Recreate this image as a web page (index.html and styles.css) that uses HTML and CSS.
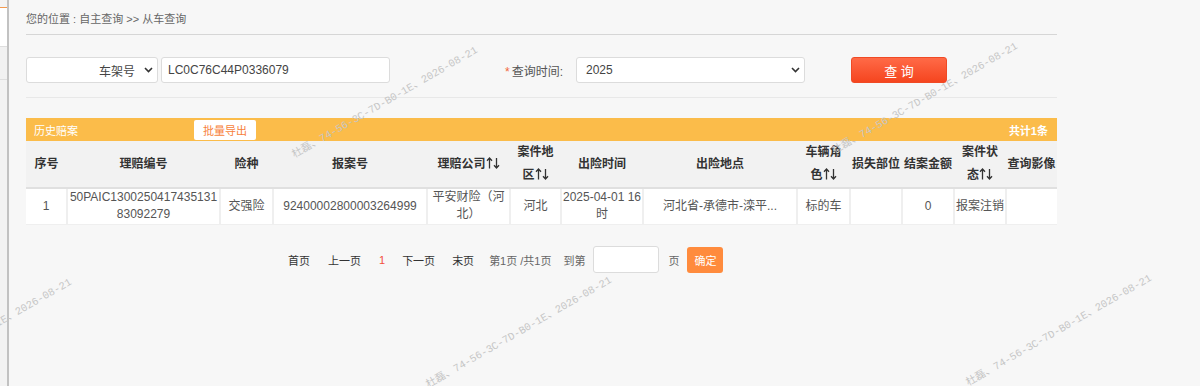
FILE: index.html
```html
<!DOCTYPE html>
<html lang="zh-CN">
<head>
<meta charset="utf-8">
<title>从车查询</title>
<link rel="stylesheet" href="styles.css">
</head>
<body>
<div class="page">
  <aside class="side">
    <div class="side-top"></div>
    <div class="side-item active"></div>
    <div class="side-item"></div>
  </aside>
  <main class="main">
    <div class="content">
      <div class="crumb">您的位置 : 自主查询 &gt;&gt; 从车查询</div>
      <form class="search">
        <div class="sel sel-type"><span>车架号</span><svg class="chev" width="9" height="6" viewBox="0 0 9 6"><polyline points="1,1 4.5,4.5 8,1" fill="none" stroke="#333" stroke-width="1.6"/></svg></div>
        <div class="inp">LC0C76C44P0336079</div>
        <label class="lbl"><em>*</em>查询时间:</label>
        <div class="sel sel-year"><span>2025</span><svg class="chev" width="9" height="6" viewBox="0 0 9 6"><polyline points="1,1 4.5,4.5 8,1" fill="none" stroke="#333" stroke-width="1.6"/></svg></div>
        <button type="button" class="btn-query">查 询</button>
      </form>
      <section class="result">
        <div class="bar">
          <span class="bar-title">历史赔案</span>
          <button type="button" class="btn-export">批量导出</button>
          <span class="bar-total">共计1条</span>
        </div>
        <table class="grid">
          <colgroup>
            <col class="c41"><col class="c153"><col class="c53"><col class="c154"><col class="c83"><col class="c51"><col class="c82"><col class="c154"><col class="c53"><col class="c52"><col class="c52"><col class="c52"><col class="c51">
          </colgroup>
          <thead>
            <tr>
              <th>序号</th>
              <th>理赔编号</th>
              <th>险种</th>
              <th>报案号</th>
              <th>理赔公<span class="nw">司<svg class="ar" width="14" height="12" viewBox="0 0 14 12"><path d="M3.5 11.5V1M1 3.8L3.5 1L6 3.8M10.5 1v10.5M8 8.2l2.5 2.8l2.5-2.8" fill="none" stroke="#333" stroke-width="1.3"/></svg></span></th>
              <th>案件地<span class="nw">区<svg class="ar" width="14" height="12" viewBox="0 0 14 12"><path d="M3.5 11.5V1M1 3.8L3.5 1L6 3.8M10.5 1v10.5M8 8.2l2.5 2.8l2.5-2.8" fill="none" stroke="#333" stroke-width="1.3"/></svg></span></th>
              <th>出险时间</th>
              <th>出险地点</th>
              <th>车辆角<span class="nw">色<svg class="ar" width="14" height="12" viewBox="0 0 14 12"><path d="M3.5 11.5V1M1 3.8L3.5 1L6 3.8M10.5 1v10.5M8 8.2l2.5 2.8l2.5-2.8" fill="none" stroke="#333" stroke-width="1.3"/></svg></span></th>
              <th class="one">损失部位</th>
              <th class="one">结案金额</th>
              <th>案件状<span class="nw">态<svg class="ar" width="14" height="12" viewBox="0 0 14 12"><path d="M3.5 11.5V1M1 3.8L3.5 1L6 3.8M10.5 1v10.5M8 8.2l2.5 2.8l2.5-2.8" fill="none" stroke="#333" stroke-width="1.3"/></svg></span></th>
              <th class="one">查询影像</th>
            </tr>
          </thead>
          <tbody>
            <tr>
              <td>1</td>
              <td class="brk">50PAIC130025041743513183092279</td>
              <td>交强险</td>
              <td>92400002800003264999</td>
              <td>平安财险（河北）</td>
              <td>河北</td>
              <td><span class="nw">2025-04-01 16</span><wbr>时</td>
              <td>河北省-承德市-滦平...</td>
              <td>标的车</td>
              <td></td>
              <td>0</td>
              <td>报案注销</td>
              <td></td>
            </tr>
          </tbody>
        </table>
      </section>
      <nav class="pager">
        <a class="pg pg-first">首页</a>
        <a class="pg pg-prev">上一页</a>
        <a class="pg pg-cur">1</a>
        <a class="pg pg-next">下一页</a>
        <a class="pg pg-last">末页</a>
        <span class="pg-info">第1页 /共1页</span>
        <span class="pg-to">到第</span>
        <span class="pg-input"></span>
        <span class="pg-unit">页</span>
        <button type="button" class="pg-ok">确定</button>
      </nav>
    </div>
  </main>
</div>
<div class="wm-layer">
  <span class="wm wm-a">杜磊、74-56-3C-7D-B0-1E、2026-08-21</span>
  <span class="wm wm-b">杜磊、74-56-3C-7D-B0-1E、2026-08-21</span>
  <span class="wm wm-c">杜磊、74-56-3C-7D-B0-1E、2026-08-21</span>
  <span class="wm wm-d">杜磊、74-56-3C-7D-B0-1E、2026-08-21</span>
  <span class="wm wm-e">杜磊、74-56-3C-7D-B0-1E、2026-08-21</span>
</div>
</body>
</html>
```
FILE: styles.css
```css
* { box-sizing: border-box; }
html, body {
  margin: 0;
  padding: 0;
  height: 100%;
}
body {
  position: relative;
  overflow: hidden;
  background: #f7f7f7;
  font-family: "Liberation Sans", "Noto Sans CJK SC", sans-serif;
  color: #555;
}
.page {
  display: flex;
  min-height: 386px;
}
.side {
  width: 9px;
  flex: none;
  background: #f3f3f3;
  border-right: 2px solid #c2c2c2;
}
.side-top {
  height: 7px;
  background: #f3f3f3;
}
.side-item {
  height: 33px;
  border-bottom: 1px solid #dedede;
  background: #f1f1f1;
}
.side-item.active {
  height: 40px;
  background: #fff;
  border-top: 1px solid #f39a4f;
}
.main {
  flex: 1;
  padding-left: 17px;
}
.content {
  width: 1031px;
}
.crumb {
  font-size: 11px;
  line-height: 16px;
  color: #666;
  padding: 11px 0 7px;
  border-bottom: 1px solid #d6d6d6;
}
.search {
  display: flex;
  align-items: center;
  margin: 0;
  padding: 22px 0 14px;
  border-bottom: 1px solid #e8e8e8;
}
.sel, .inp {
  height: 26px;
  background: #fff;
  border: 1px solid #dcdcdc;
  border-radius: 3px;
  font-size: 12px;
  color: #444;
  display: flex;
  align-items: center;
}
.sel-type {
  width: 132px;
  justify-content: flex-end;
  padding-right: 4px;
}
.sel-type span { margin-right: 9px; }
.inp {
  width: 229px;
  margin-left: 3px;
  padding-left: 6px;
}
.lbl {
  margin-left: 115px;
  width: 71px;
  font-size: 12px;
  color: #555;
}
.lbl em {
  font-style: normal;
  color: #f2683a;
  margin-right: 2px;
}
.sel-year {
  width: 229px;
  justify-content: space-between;
  padding: 0 4px 0 9px;
}
.btn-query {
  margin-left: 46px;
  width: 96px;
  height: 26px;
  border: 1px solid #f04a25;
  border-radius: 3px;
  background: linear-gradient(#ff6a47, #f5451f);
  color: #fff;
  font-family: inherit;
  font-size: 13px;
  padding: 0;
}
.result {
  margin-top: 20px;
}
.bar {
  height: 23px;
  background: #fbbc4a;
  display: flex;
  align-items: center;
  padding: 0 9px 0 8px;
  font-size: 11px;
  color: #fff;
}
.btn-export {
  margin-left: 116px;
  width: 62px;
  height: 20px;
  border: 0;
  border-radius: 2px;
  background: #fff;
  color: #f77f3b;
  font-family: inherit;
  font-size: 11px;
  padding: 0;
}
.bar-total {
  margin-left: auto;
  font-weight: bold;
}
.grid {
  width: 1031px;
  border-collapse: collapse;
  table-layout: fixed;
  font-size: 12px;
}
.c41 { width: 41px; }
.c51 { width: 51px; }
.c52 { width: 52px; }
.c53 { width: 53px; }
.c82 { width: 82px; }
.c83 { width: 83px; }
.c153 { width: 153px; }
.c154 { width: 154px; }
.grid th {
  height: 47px;
  padding: 0 1px;
  background: #f2f2f2;
  color: #333;
  font-weight: bold;
  line-height: 23px;
  text-align: center;
  border-bottom: 2px solid #e0e0e0;
}
.grid th.one { white-space: nowrap; }
.nw { white-space: nowrap; }
.ar {
  display: inline-block;
  vertical-align: -1px;
}
.grid td {
  height: 36px;
  padding: 0;
  background: #fff;
  color: #555;
  line-height: 17px;
  text-align: center;
  border-left: 2px solid #efefef;
  border-right: 2px solid #efefef;
  border-bottom: 1px solid #efefef;
}
.grid td:first-child { border-left: 0; }
.grid td:last-child { border-right: 0; }
.grid td.brk { word-break: break-all; padding: 0 1px; }
.pager {
  display: flex;
  align-items: center;
  height: 26px;
  margin-top: 22px;
  padding-left: 262px;
  font-size: 11px;
  color: #666;
}
.pg {
  color: #333;
  margin-right: 18px;
}
.pg-cur { color: #f2503a; margin-right: 17px; }
.pg-next { margin-right: 17px; }
.pg-last { margin-right: 15px; }
.pg-info { margin-right: 12px; }
.pg-to { margin-right: 8px; }
.pg-input {
  width: 66px;
  height: 27px;
  background: #fff;
  border: 1px solid #dcdcdc;
  border-radius: 3px;
  margin-right: 9px;
}
.pg-unit { margin-right: 8px; }
.pg-ok {
  width: 36px;
  height: 26px;
  border: 0;
  border-radius: 3px;
  background: #ff8b3d;
  color: #fff;
  font-family: inherit;
  font-size: 11px;
  padding: 0;
}
.wm-layer {
  position: absolute;
  inset: 0;
  pointer-events: none;
  overflow: hidden;
}
.wm {
  position: absolute;
  font-family: "Liberation Mono", "Noto Sans CJK SC", monospace;
  font-size: 10.5px;
  color: #c6c6c6;
  white-space: nowrap;
  transform: translate(-50%, -50%) rotate(-30deg);
}
.wm-a { left: 384px; top: 101px; }
.wm-b { left: 924px; top: 97px; }
.wm-c { left: -22px; top: 333px; }
.wm-d { left: 518px; top: 331px; }
.wm-e { left: 1058px; top: 329px; }
```
